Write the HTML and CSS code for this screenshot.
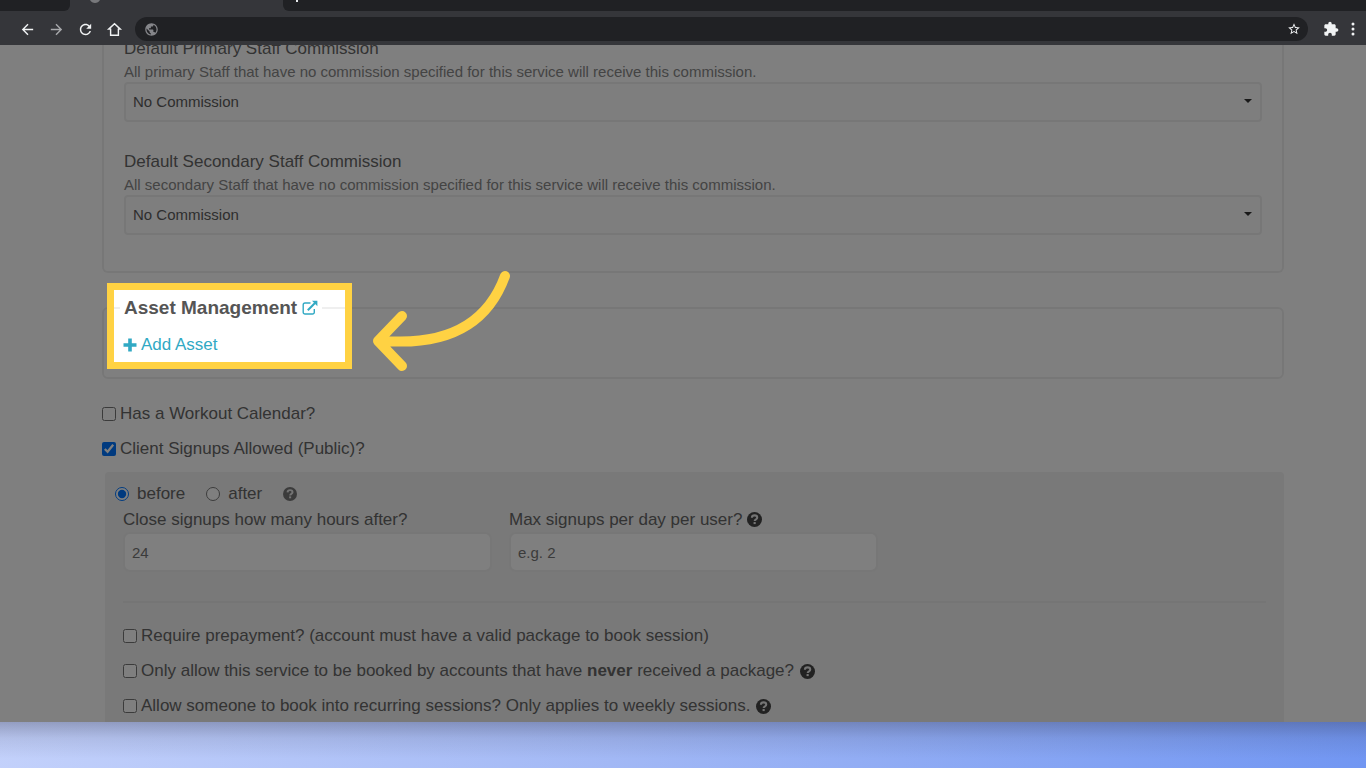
FILE: index.html
```html
<!DOCTYPE html>
<html lang="en">
<head>
<meta charset="utf-8">
<title>Service settings</title>
<link rel="stylesheet" href="styles.css">
</head>
<body>
<svg class="sprite" aria-hidden="true">
  <symbol id="help" viewBox="0 0 16 16">
    <circle cx="8" cy="8" r="8" fill="currentColor"/>
    <path d="M5.200 6.100C5.300 4.300 6.500 3.600 8.100 3.600c1.600 0 2.800.9 2.800 2.400 0 1.900-2.700 1.800-2.700 3.700" fill="none" stroke="#e8e8e8" stroke-width="2.200"/>
    <rect x="7" y="10.700" width="2.300" height="2.200" fill="#e8e8e8"/>
  </symbol>
  <symbol id="globe" viewBox="0 0 24 24">
    <path fill="currentColor" d="M12 2C6.480 2 2 6.480 2 12s4.480 10 10 10 10-4.480 10-10S17.520 2 12 2zm-1 17.930c-3.950-.49-7-3.850-7-7.930 0-.62.080-1.210.210-1.790L9 15v1c0 1.100.9 2 2 2v1.930zm6.900-2.540c-.26-.81-1-1.390-1.900-1.390h-1v-3c0-.55-.45-1-1-1H8v-2h2c.55 0 1-.45 1-1V7h2c1.100 0 2-.9 2-2v-.41c2.930 1.190 5 4.060 5 7.410 0 2.080-.8 3.970-2.100 5.390z"/>
  </symbol>
</svg>

<header class="browser">
  <div class="tabs">
    <div class="tab-before"></div>
    <div class="tab-active"><svg class="favicon" viewBox="0 0 10 3"><path d="M0 0h10c-1 2-3 3-5 3S1 2 0 0z" fill="#77787b"/></svg></div>
    <div class="tab-after"><svg class="new-tab" viewBox="0 0 4 3"><path d="M1 0h2v2H1z" fill="#e8eaed"/></svg></div>
  </div>
  <div class="toolbar">
    <button class="tool" aria-label="Back"><svg viewBox="0 0 24 24"><path fill="currentColor" d="M20 11H7.830l5.590-5.590L12 4l-8 8 8 8 1.410-1.410L7.830 13H20v-2z"/></svg></button>
    <button class="tool tool-dim" aria-label="Forward"><svg viewBox="0 0 24 24"><path fill="currentColor" d="M12 4l-1.410 1.410L16.170 11H4v2h12.170l-5.580 5.590L12 20l8-8z"/></svg></button>
    <button class="tool" aria-label="Reload"><svg viewBox="0 0 24 24"><path fill="currentColor" d="M17.650 6.350C16.200 4.900 14.210 4 12 4c-4.420 0-7.990 3.580-7.990 8s3.570 8 7.990 8c3.730 0 6.840-2.550 7.730-6h-2.080c-.82 2.330-3.040 4-5.650 4-3.310 0-6-2.690-6-6s2.690-6 6-6c1.660 0 3.140.69 4.220 1.780L13 11h7V4l-2.350 2.350z"/></svg></button>
    <button class="tool" aria-label="Home"><svg viewBox="0 0 24 24"><path fill="none" stroke="currentColor" stroke-width="2" d="M6.500 11.500H3.800L12 3.800l8.200 7.700h-2.700V20h-11z"/></svg></button>
    <div class="address"><svg class="address-globe"><use href="#globe"/></svg>
      <button class="star" aria-label="Bookmark"><svg viewBox="0 0 24 24"><path fill="currentColor" d="M22 9.240l-7.190-.62L12 2 9.190 8.630 2 9.240l5.460 4.730L5.820 21 12 17.270 18.180 21l-1.630-7.030L22 9.240zM12 15.400l-3.760 2.270 1-4.280-3.320-2.880 4.380-.38L12 6.100l1.710 4.040 4.380.38-3.320 2.880 1 4.280L12 15.400z"/></svg></button>
    </div>
    <button class="extensions" aria-label="Extensions"><svg viewBox="0 0 24 24"><path fill="currentColor" d="M20.500 11H19V7c0-1.100-.9-2-2-2h-4V3.500C13 2.120 11.880 1 10.500 1S8 2.120 8 3.500V5H4c-1.100 0-1.990.9-1.990 2v3.800H3.500c1.490 0 2.700 1.210 2.700 2.700s-1.210 2.700-2.700 2.700H2V20c0 1.100.9 2 2 2h3.800v-1.500c0-1.490 1.210-2.700 2.700-2.700 1.490 0 2.700 1.210 2.700 2.700V22H17c1.100 0 2-.9 2-2v-4h1.500c1.380 0 2.500-1.120 2.500-2.500S21.880 11 20.500 11z"/></svg></button>
    <button class="menu" aria-label="Menu"><svg viewBox="0 0 4 14"><g fill="currentColor"><circle cx="2" cy="2" r="1.500"/><circle cx="2" cy="7" r="1.500"/><circle cx="2" cy="12" r="1.500"/></g></svg></button>
  </div>
</header>

<main class="page">
  <section class="box commissions">
    <label class="label" for="primary">Default Primary Staff Commission</label>
    <p class="hint">All primary Staff that have no commission specified for this service will receive this commission.</p>
    <div class="select-wrap"><select id="primary" class="select"><option>No Commission</option></select></div>
    <label class="label label-next" for="secondary">Default Secondary Staff Commission</label>
    <p class="hint">All secondary Staff that have no commission specified for this service will receive this commission.</p>
    <div class="select-wrap"><select id="secondary" class="select"><option>No Commission</option></select></div>
  </section>

  <div class="asset-area">
    <fieldset class="box assets">
      <legend class="legend">Asset Management
        <a class="external" href="#assets" aria-label="Open assets"><svg viewBox="0 0 16 16"><path d="M8.500 3H3a1.800 1.800 0 0 0-1.800 1.800v7.400A1.800 1.800 0 0 0 3 14h7.500a1.800 1.800 0 0 0 1.800-1.800V9" fill="none" stroke="currentColor" stroke-width="1.400"/><path d="M5.800 10.200L13 3" fill="none" stroke="currentColor" stroke-width="2"/><path d="M10 .8h5.400v5.400z" fill="currentColor"/></svg></a>
      </legend>
      <a class="add" href="#add"><svg viewBox="0 0 14 14"><path d="M5.200.5h3.600v4.700h4.700v3.600H8.800v4.700H5.200V8.800H.5V5.200h4.700z" fill="currentColor"/></svg>Add Asset</a>
    </fieldset>
    <div class="spotlight"></div>
    <svg class="arrow" viewBox="0 0 142 106" aria-hidden="true"><path d="M135 8C119 52 83 78 15 73M32 48L8 73l24 25" fill="none" stroke="#ffd243" stroke-width="10" stroke-linecap="round" stroke-linejoin="round"/></svg>
  </div>

  <div class="checks checks-top">
    <label class="check"><input type="checkbox">Has a Workout Calendar?</label>
    <label class="check"><input type="checkbox" checked>Client Signups Allowed (Public)?</label>
  </div>

  <section class="panel">
    <div class="radios">
      <label class="radio"><input type="radio" name="when" checked>before</label>
      <label class="radio"><input type="radio" name="when">after</label>
      <svg class="help help-soft"><use href="#help"/></svg>
    </div>
    <div class="panel-body">
      <div class="fields">
        <div class="field">
          <label class="label" for="hours">Close signups how many hours after?</label>
          <input class="text" id="hours" type="text" value="24">
        </div>
        <div class="field">
          <label class="label" for="max">Max signups per day per user? <svg class="help"><use href="#help"/></svg></label>
          <input class="text" id="max" type="text" placeholder="e.g. 2">
        </div>
      </div>
      <hr class="rule">
      <div class="checks">
        <label class="check"><input type="checkbox">Require prepayment? (account must have a valid package to book session)</label>
        <label class="check"><input type="checkbox"><span>Only allow this service to be booked by accounts that have <strong>never</strong> received a package?</span> <svg class="help"><use href="#help"/></svg></label>
        <label class="check"><input type="checkbox">Allow someone to book into recurring sessions? Only applies to weekly sessions. <svg class="help"><use href="#help"/></svg></label>
      </div>
    </div>
  </section>
</main>
<footer class="backdrop"></footer>
</body>
</html>
```
FILE: styles.css
```css
* { box-sizing: border-box; }

body {
  margin: 0;
  height: 100vh;
  display: flex;
  flex-direction: column;
  overflow: hidden;
  font-family: "Liberation Sans", Arial, sans-serif;
  font-size: 17px;
  line-height: 24px;
  color: #666;
}

button {
  padding: 0;
  border: 0;
  background: none;
  color: #f1f3f4;
  display: flex;
}

.sprite { position: absolute; width: 0; height: 0; }

/* Browser bar */
.browser { flex: none; background: #35363a; }
.tabs { display: flex; height: 11px; }
.tab-before { width: 70px; background: #202124; border-bottom-right-radius: 6px; }
.tab-active { width: 213px; padding-left: 20px; }
.tab-after { flex: 1; padding-left: 12px; background: #202124; border-bottom-left-radius: 6px; }
.favicon { display: block; width: 10px; height: 3px; }
.new-tab { display: block; width: 4px; height: 3px; }

.toolbar {
  display: flex;
  align-items: center;
  gap: 12px;
  height: 34px;
  padding: 2px 11px 0 19px;
}
.toolbar .tool svg { width: 17px; height: 17px; }
.toolbar .tool-dim { color: #a8a9ac; }
.address {
  flex: 1;
  display: flex;
  align-items: center;
  justify-content: space-between;
  height: 24px;
  padding: 0 7px 0 9px;
  border-radius: 12px;
  background: #202124;
}
.address-globe { width: 15px; height: 15px; color: #85868a; }
.star svg { width: 14px; height: 14px; }
.extensions { margin-left: 3px; }
.extensions svg { width: 16px; height: 16px; }
.menu svg { width: 4px; height: 14px; }

/* Page */
.page {
  position: relative;
  flex: 1;
  min-height: 0;
  overflow: hidden;
  padding: 0 82px 0 102px;
  background: #fff;
}

.box {
  margin: 0;
  padding: 0 20px;
  border: 2px solid #efefef;
  border-radius: 6px;
}

.commissions {
  padding-bottom: 36px;
  border-top: 0;
  border-radius: 0 0 6px 6px;
  margin-top: -8px;
}
.label { display: block; }
.label-next { margin-top: 28px; }
.hint { margin: 0; font-size: 15px; line-height: 21px; color: #888; }

.select-wrap { position: relative; }
.select-wrap::after {
  content: "";
  position: absolute;
  top: 17px;
  right: 10px;
  border: 4px solid transparent;
  border-top-color: #333;
  border-bottom: 0;
}
.select {
  appearance: none;
  display: block;
  width: 100%;
  height: 40px;
  padding: 0 7px;
  border: 2px solid #efefef;
  border-radius: 4px;
  background: #fcfcfc;
  color: #5c5c5c;
  font: inherit;
  font-size: 15px;
}

.asset-area { position: relative; margin-top: 23px; }
.assets { padding: 0 16px 20px; }
.legend {
  padding: 0 4px;
  font-size: 19px;
  font-weight: bold;
  color: #555;
}
.external { color: #31a9c4; }
.external svg { width: 16px; height: 16px; vertical-align: -2px; }
.add {
  display: flex;
  align-items: center;
  gap: 4px;
  margin: 13px 3px 0;
  color: #31a9c4;
  text-decoration: none;
}
.add svg { width: 14px; height: 14px; }

/* Dims everything on the page except what it frames */
.spotlight {
  position: absolute;
  z-index: 2;
  top: -13px;
  left: 5px;
  width: 245px;
  height: 86px;
  border: 7px solid #ffd243;
  box-shadow: 0 0 0 2000px rgba(0, 0, 0, .5);
}
.arrow {
  position: absolute;
  z-index: 3;
  top: -28px;
  left: 268px;
  width: 142px;
  height: 106px;
}

/* Options */
.checks { display: flex; flex-direction: column; gap: 11px; }
.checks-top { margin-top: 23px; }
.check { display: flex; align-items: center; gap: 4px; }
.check input, .radio input {
  flex: none;
  width: 14px;
  height: 14px;
  margin: 0;
}
.help { width: 15px; height: 15px; color: #444; vertical-align: -2px; }
.check .help { margin-left: 2px; }
.radios .help-soft { width: 14px; height: 14px; color: #777; }

.panel {
  margin: 11px 0 0 3px;
  padding: 10px 18px 20px 10px;
  border-radius: 4px;
  background: #f2f2f2;
}
.radios { display: flex; align-items: center; gap: 21px; }
.radio { display: flex; align-items: center; gap: 8px; }
.panel-body { padding-left: 8px; }
.fields { display: flex; gap: 17px; margin-top: 2px; }
.field { width: 369px; }
.text {
  display: block;
  width: 100%;
  height: 40px;
  padding: 0 7px;
  border: 2px solid #efefef;
  border-radius: 7px;
  background: #fff;
  color: #777;
  font: inherit;
  font-size: 15px;
}
.text::placeholder { color: #777; opacity: 1; }
.rule { margin: 29px 0 21px; border: 0; border-top: 2px solid #ebebeb; }

.backdrop {
  flex: none;
  height: 46px;
  background:
    linear-gradient(rgba(40, 40, 60, .3), rgba(40, 40, 60, .1) 35%, rgba(40, 40, 60, 0) 80%),
    linear-gradient(100deg, #c3d1fb, #a2b8f5 45%, #7196f2);
}
```
